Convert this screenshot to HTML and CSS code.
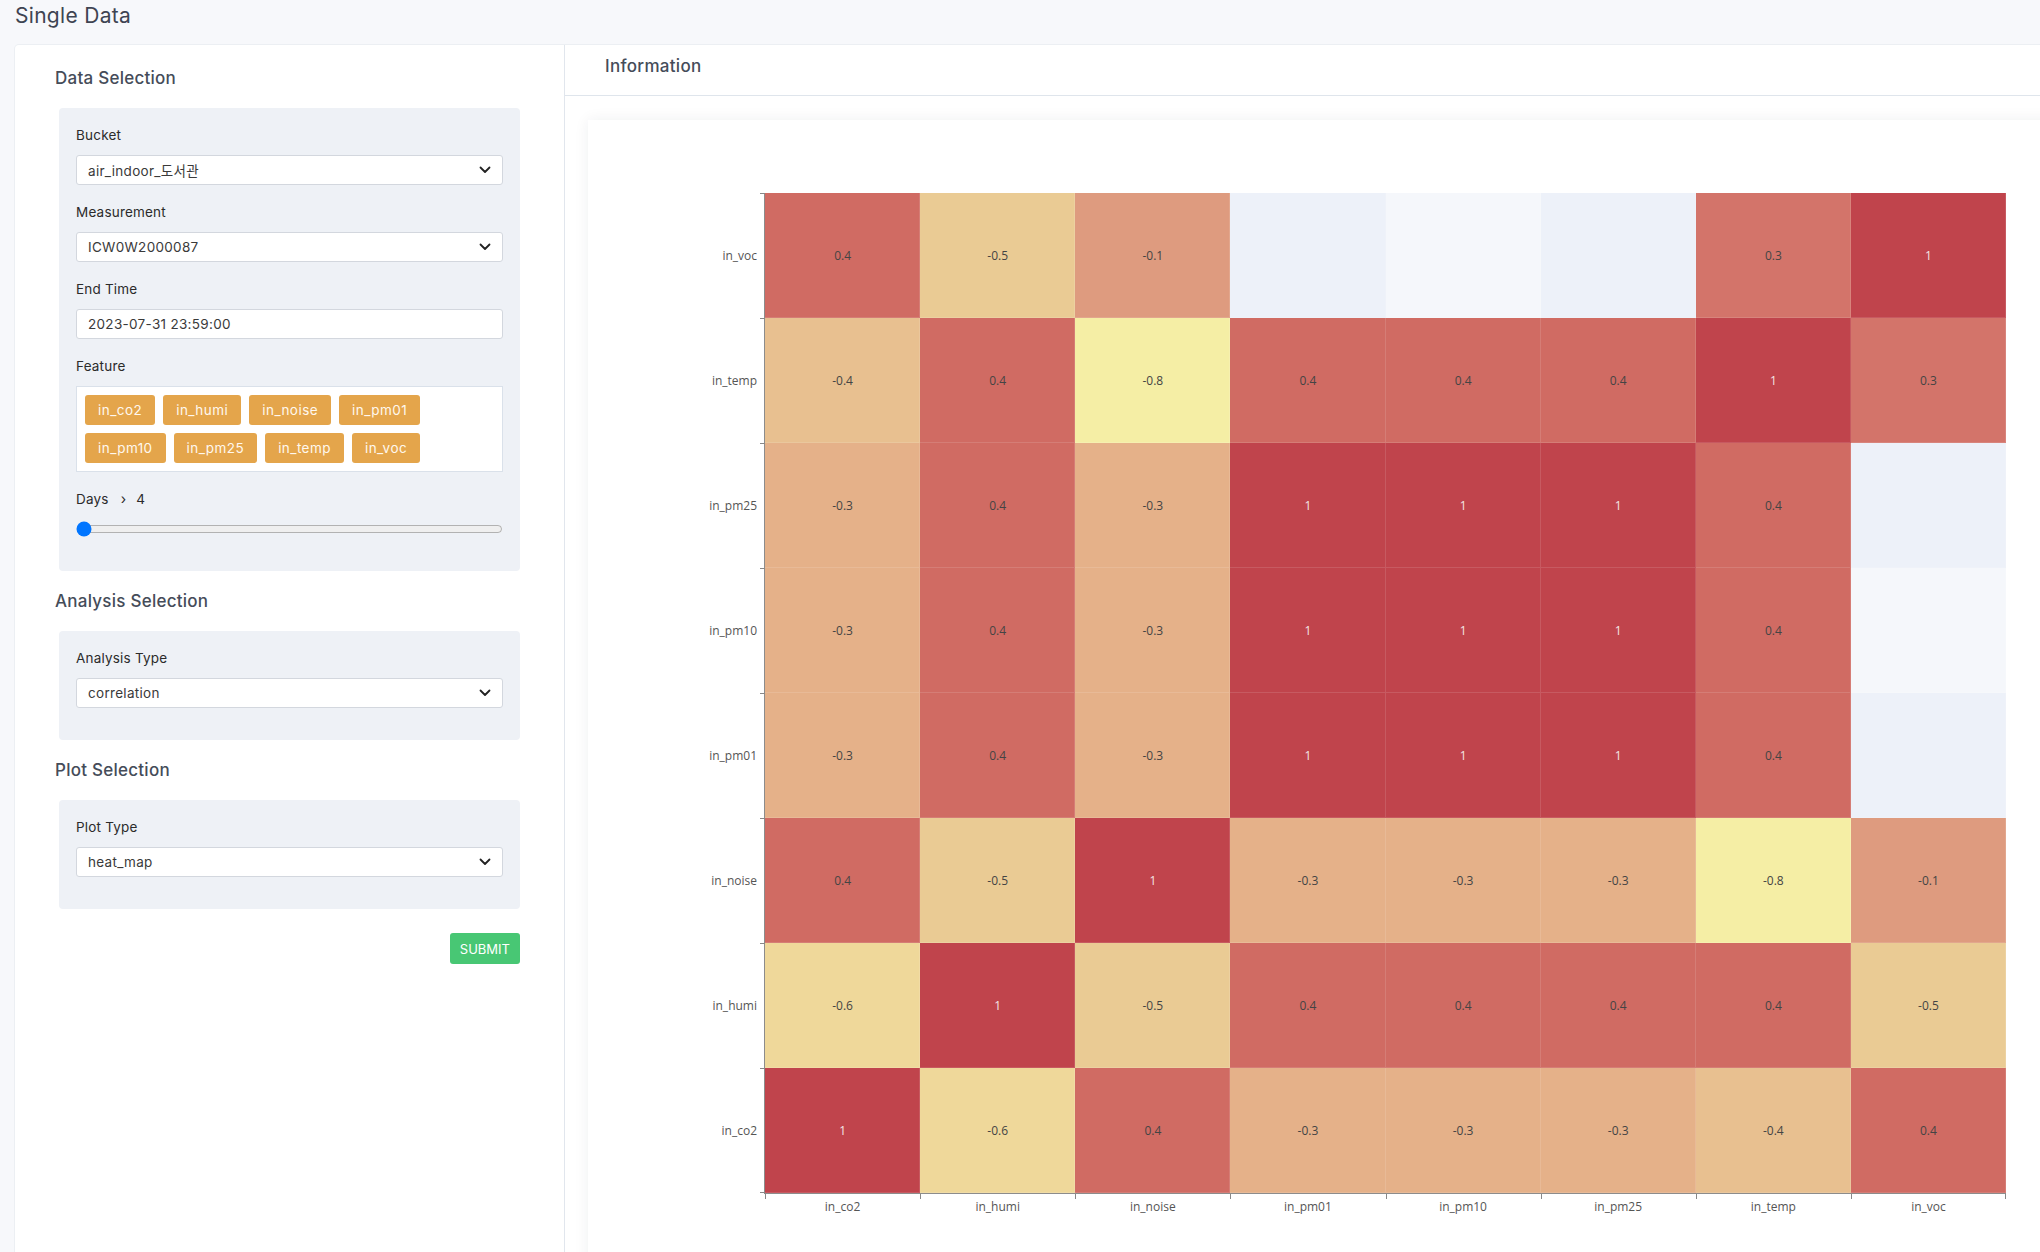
FILE: index.html
```html
<!DOCTYPE html>
<html lang="en">
<head>
<meta charset="utf-8">
<title>Single Data</title>
<link rel="stylesheet" href="styles.css">
</head>
<body>
<header class="topbar">
  <h1 class="page-title">Single Data</h1>
</header>
<main class="card">
  <aside class="left">
    <h2 class="section-title">Data Selection</h2>
    <div class="box">
      <div class="field">
        <label class="label">Bucket</label>
        <div class="select"><span>air_indoor_도서관</span><svg class="chev" viewBox="0 0 12 8"><path d="M1.5 1.5 6 6l4.5-4.5" fill="none" stroke="#222" stroke-width="1.8" stroke-linecap="round" stroke-linejoin="round"/></svg></div>
      </div>
      <div class="field">
        <label class="label">Measurement</label>
        <div class="select"><span>ICW0W2000087</span><svg class="chev" viewBox="0 0 12 8"><path d="M1.5 1.5 6 6l4.5-4.5" fill="none" stroke="#222" stroke-width="1.8" stroke-linecap="round" stroke-linejoin="round"/></svg></div>
      </div>
      <div class="field">
        <label class="label">End Time</label>
        <div class="select"><span>2023-07-31 23:59:00</span></div>
      </div>
      <div class="field">
        <label class="label">Feature</label>
        <div class="tags">
          <span class="tag">in_co2</span>
          <span class="tag">in_humi</span>
          <span class="tag">in_noise</span>
          <span class="tag">in_pm01</span>
          <span class="tag">in_pm10</span>
          <span class="tag">in_pm25</span>
          <span class="tag">in_temp</span>
          <span class="tag">in_voc</span>
        </div>
      </div>
      <div class="field">
        <label class="label days"><span>Days</span><span class="arrow">›</span><span>4</span></label>
        <input class="range" type="range" min="4" max="30" value="4">
      </div>
    </div>

    <h2 class="section-title">Analysis Selection</h2>
    <div class="box">
      <div class="field">
        <label class="label">Analysis Type</label>
        <div class="select"><span>correlation</span><svg class="chev" viewBox="0 0 12 8"><path d="M1.5 1.5 6 6l4.5-4.5" fill="none" stroke="#222" stroke-width="1.8" stroke-linecap="round" stroke-linejoin="round"/></svg></div>
      </div>
    </div>

    <h2 class="section-title">Plot Selection</h2>
    <div class="box">
      <div class="field">
        <label class="label">Plot Type</label>
        <div class="select"><span>heat_map</span><svg class="chev" viewBox="0 0 12 8"><path d="M1.5 1.5 6 6l4.5-4.5" fill="none" stroke="#222" stroke-width="1.8" stroke-linecap="round" stroke-linejoin="round"/></svg></div>
      </div>
    </div>

    <div class="actions"><button class="submit">SUBMIT</button></div>
  </aside>

  <section class="right">
    <div class="info-header">Information</div>
    <div class="plot-wrap">
      <div class="plot">
        <div class="plot-grid">
          <div class="ylabels">
            <div class="yl">in_voc</div>
            <div class="yl">in_temp</div>
            <div class="yl">in_pm25</div>
            <div class="yl">in_pm10</div>
            <div class="yl">in_pm01</div>
            <div class="yl">in_noise</div>
            <div class="yl">in_humi</div>
            <div class="yl">in_co2</div>
          </div>
          <div class="heat">
            <div class="c v04">0.4</div><div class="c vm05">-0.5</div><div class="c vm01">-0.1</div><div class="c na1"></div><div class="c na2"></div><div class="c na1"></div><div class="c v03">0.3</div><div class="c v1">1</div>
            <div class="c vm04">-0.4</div><div class="c v04">0.4</div><div class="c vm08">-0.8</div><div class="c v04">0.4</div><div class="c v04">0.4</div><div class="c v04">0.4</div><div class="c v1">1</div><div class="c v03">0.3</div>
            <div class="c vm03">-0.3</div><div class="c v04">0.4</div><div class="c vm03">-0.3</div><div class="c v1">1</div><div class="c v1">1</div><div class="c v1">1</div><div class="c v04">0.4</div><div class="c na1"></div>
            <div class="c vm03">-0.3</div><div class="c v04">0.4</div><div class="c vm03">-0.3</div><div class="c v1">1</div><div class="c v1">1</div><div class="c v1">1</div><div class="c v04">0.4</div><div class="c na2"></div>
            <div class="c vm03">-0.3</div><div class="c v04">0.4</div><div class="c vm03">-0.3</div><div class="c v1">1</div><div class="c v1">1</div><div class="c v1">1</div><div class="c v04">0.4</div><div class="c na1"></div>
            <div class="c v04">0.4</div><div class="c vm05">-0.5</div><div class="c v1">1</div><div class="c vm03">-0.3</div><div class="c vm03">-0.3</div><div class="c vm03">-0.3</div><div class="c vm08">-0.8</div><div class="c vm01">-0.1</div>
            <div class="c vm06">-0.6</div><div class="c v1">1</div><div class="c vm05">-0.5</div><div class="c v04">0.4</div><div class="c v04">0.4</div><div class="c v04">0.4</div><div class="c v04">0.4</div><div class="c vm05">-0.5</div>
            <div class="c v1">1</div><div class="c vm06">-0.6</div><div class="c v04">0.4</div><div class="c vm03">-0.3</div><div class="c vm03">-0.3</div><div class="c vm03">-0.3</div><div class="c vm04">-0.4</div><div class="c v04">0.4</div>
          </div>
          <div class="xaxis">
            <div class="xl">in_co2</div>
            <div class="xl">in_humi</div>
            <div class="xl">in_noise</div>
            <div class="xl">in_pm01</div>
            <div class="xl">in_pm10</div>
            <div class="xl">in_pm25</div>
            <div class="xl">in_temp</div>
            <div class="xl">in_voc</div>
          </div>
        </div>
      </div>
    </div>
  </section>
</main>
</body>
</html>
```

FILE: styles.css
```css
html, body {
  margin: 0;
  height: 1252px;
  overflow: hidden;
}
body {
  background: #f7f8fb;
  font-family: Inter, "Noto Sans", "Noto Sans CJK KR", sans-serif;
  color: #363636;
}
.topbar {
  height: 45px;
  padding-left: 15px;
  box-sizing: border-box;
}
.page-title {
  margin: 0;
  font-size: 21px;
  font-weight: 400;
  line-height: 32px;
  letter-spacing: 0.3px;
  color: #3e4452;
}
.card {
  margin-left: 15px;
  display: flex;
  background: #fff;
  border-radius: 4px 0 0 0;
  height: 1207px;
  box-shadow: 0 0 0 1px #eceff3;
}
.left {
  flex: 0 0 550px;
  box-sizing: border-box;
  padding: 3px 44px 0 40px;
  border-right: 1px solid #e1e6ed;
}
.section-title {
  margin: 18px 0;
  font-size: 17px;
  font-weight: 500;
  line-height: 24px;
  letter-spacing: 0.25px;
  color: #454c59;
}
.box {
  margin-left: 4px;
  background: #eef1f6;
  border-radius: 4px;
  padding: 18px 17px 14px;
}
.field {
  margin-bottom: 18px;
}
.label {
  display: block;
  font-size: 13.5px;
  line-height: 18px;
  margin-bottom: 11px;
  letter-spacing: 0.2px;
  color: #2b2b2b;
}
.days {
  display: flex;
  align-items: center;
}
.days .arrow {
  margin: 0 10px 0 12px;
  font-size: 14px;
}
.select {
  height: 30px;
  box-sizing: border-box;
  background: #fff;
  border: 1px solid #d3d7de;
  border-radius: 3px;
  display: flex;
  align-items: center;
  padding: 0 11px 0 11px;
  font-size: 13.5px;
  letter-spacing: 0.3px;
  color: #3a3a3a;
}
.select span {
  flex: 1;
  font-family: Inter, "Noto Sans CJK KR", sans-serif;
}
.chev {
  width: 12px;
  height: 8px;
}
.tags {
  border: 1px solid #dae1ea;
  background: #fff;
  padding: 8px;
  display: flex;
  flex-wrap: wrap;
  gap: 8px;
}
.tag {
  height: 30px;
  line-height: 30px;
  padding: 0 13px;
  background: #e4a54b;
  color: #fff8ee;
  border-radius: 3px;
  font-size: 13.5px;
  letter-spacing: 0.45px;
}
.range {
  display: block;
  width: 100%;
  margin: 0;
  height: 20px;
}
.actions {
  display: flex;
  justify-content: flex-end;
  margin-top: 24px;
}
.submit {
  height: 31px;
  padding: 0 10px;
  background: #48c774;
  color: #fff;
  border: 0;
  border-radius: 3px;
  font-family: Inter, sans-serif;
  font-size: 13px;
}
.right {
  flex: 1;
  min-width: 0;
  overflow: hidden;
}
.info-header {
  padding: 9px 0 17px 40px;
  border-bottom: 1px solid #dfe5ec;
  font-size: 17px;
  line-height: 24px;
  font-weight: 500;
  letter-spacing: 0.3px;
  color: #454c59;
}
.plot-wrap {
  padding: 24px 0 0 23px;
}
.plot {
  width: 1500px;
  height: 1150px;
  box-sizing: border-box;
  padding-top: 73px;
  background: #fff;
  box-shadow: 0 0 14px rgba(30, 40, 60, 0.07);
  font-family: "Open Sans", Verdana, sans-serif;
  font-size: 12px;
  color: #444;
}
.plot-grid {
  display: grid;
  grid-template-columns: 177px 1241px;
  grid-template-rows: 1000px auto;
}
.ylabels {
  display: grid;
  grid-template-rows: repeat(8, 1fr);
}
.yl {
  position: relative;
  display: flex;
  align-items: center;
  justify-content: flex-end;
  padding-right: 8px;
  color: #555;
}
.yl::before,
.yl:last-child::after {
  content: "";
  position: absolute;
  right: 0;
  top: 0;
  width: 5px;
  height: 1px;
  background: #888;
}
.yl:last-child::after {
  top: auto;
  bottom: 0;
}
.heat {
  display: grid;
  grid-template-columns: repeat(8, 1fr);
  grid-template-rows: repeat(8, 1fr);
  box-shadow: -1px 0 0 #8c8c8c, 0 1px 0 #8c8c8c, -1px 1px 0 #8c8c8c;
}
.c {
  display: flex;
  align-items: center;
  justify-content: center;
  box-shadow: inset -1px -1px 0 rgba(255, 255, 255, 0.12);
}
.v1 { background: #c0444c; color: #f4e6e6; }
.v04 { background: #d06b63; }
.v03 { background: #d3746a; }
.vm01 { background: #de9b7f; }
.vm03 { background: #e5b189; }
.vm04 { background: #e8c090; }
.vm05 { background: #eacb94; }
.vm06 { background: #efd89a; }
.vm08 { background: #f5eea5; }
.na1 { background: #edf1f9; }
.na2 { background: #f5f7fb; }
.xaxis {
  grid-column: 2;
  display: grid;
  grid-template-columns: repeat(8, 1fr);
}
.xl {
  position: relative;
  text-align: center;
  padding-top: 6px;
  line-height: 16px;
  color: #555;
}
.xl::before,
.xl:last-child::after {
  content: "";
  position: absolute;
  left: 0;
  top: 1px;
  width: 1px;
  height: 5px;
  background: #888;
}
.xl:last-child::after {
  left: auto;
  right: 0;
}
```
